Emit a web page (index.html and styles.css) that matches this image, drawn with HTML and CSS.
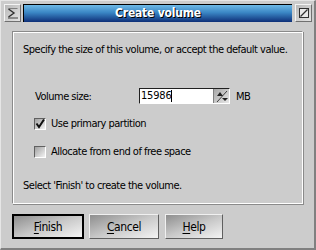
FILE: index.html
```html
<!DOCTYPE html>
<html lang="en">
<head>
    <meta charset="UTF-8">
    <title>Create volume</title>
    <link rel="stylesheet" href="styles.css">
</head>
<body>
    <div class="window">
        <div class="titlerow">
            <div class="tbtn">
                <svg width="12" height="12" viewBox="0 0 12 12">
                    <polyline points="1.5,1.5 10.5,1.5" stroke="#808080" stroke-width="1" fill="none"/>
                    <polyline points="1.5,2 7,6 1.5,10" stroke="#303030" stroke-width="1.4" fill="none"/>
                    <polyline points="1,11 11,11" stroke="#404040" stroke-width="1" fill="none"/>
                </svg>
            </div>
            <div class="titlebar">Create volume</div>
            <div class="tbtn">
                <svg width="12" height="12" viewBox="0 0 12 12">
                    <rect x="1.5" y="1.5" width="9" height="9" stroke="#303030" stroke-width="1" fill="#e8e8e8"/>
                    <line x1="2.5" y1="9.5" x2="9.5" y2="2.5" stroke="#303030" stroke-width="1.3"/>
                </svg>
            </div>
        </div>

        <div class="panel">
            <p class="intro">Specify the size of this volume, or accept the default value.</p>

            <div class="sizerow">
                <span class="label">Volume size:</span>
                <div class="spin">
                    <div class="field">15986<span class="caret"></span></div>
                    <div class="spinbtn">
                        <svg width="14" height="13" viewBox="0 0 14 13">
                            <line x1="12" y1="1" x2="2" y2="12" stroke="#404040" stroke-width="1"/>
                            <polygon points="2,6 5,2 8,6" fill="#202020"/>
                            <polygon points="7,8 13,8 10,11" fill="#202020"/>
                        </svg>
                    </div>
                </div>
                <span class="unit">MB</span>
            </div>

            <label class="check">
                <span class="box">
                    <svg width="10" height="10" viewBox="0 0 10 10">
                        <polyline points="1.5,4.5 4,8 9,0.5" stroke="#101010" stroke-width="2" fill="none"/>
                    </svg>
                </span>
                Use primary partition
            </label>

            <label class="check second">
                <span class="box"></span>
                Allocate from end of free space
            </label>

            <p class="outro">Select 'Finish' to create the volume.</p>
        </div>

        <div class="buttons">
            <button class="btn default"><u>F</u>inish</button>
            <button class="btn cancel"><u>C</u>ancel</button>
            <button class="btn help"><u>H</u>elp</button>
        </div>
    </div>
</body>
</html>
```

FILE: styles.css
```css
* {
    box-sizing: border-box;
}
body {
    margin: 0;
    background: #cccccc;
    font-family: "DejaVu Sans Condensed", "Liberation Sans", sans-serif;
    font-size: 11px;
    letter-spacing: -0.5px;
    color: #000;
}
.window {
    width: 316px;
    height: 250px;
    background: #cccccc;
    border-top: 1px solid #e6e6e6;
    border-left: 1px solid #e6e6e6;
    border-right: 2px solid #808080;
    border-bottom: 2px solid #808080;
    padding: 3px 2px 0 3px;
    display: flex;
    flex-direction: column;
}
.titlerow {
    display: flex;
    gap: 2px;
    height: 18px;
}
.tbtn {
    width: 17px;
    height: 18px;
    background: linear-gradient(135deg, #b8b8b8, #e4e4e4);
    border: 1px solid;
    border-color: #f4f4f4 #707070 #707070 #f4f4f4;
    display: flex;
    align-items: center;
    justify-content: center;
}
.titlebar {
    flex: 1;
    background: linear-gradient(#6cb8e6, #3a86c4 45%, #0e2f78);
    border-top: 1px solid #000;
    border-left: 1px solid #000;
    color: #fff;
    font-weight: bold;
    font-size: 12px;
    letter-spacing: -0.2px;
    text-align: center;
    line-height: 16px;
    text-shadow: 1px 1px 0 #000;
    margin-right: 1px;
}
.panel {
    margin: 9px 9px 0 8px;
    height: 173px;
    border: 1px solid;
    border-color: #8a8a8a #ffffff #ffffff #8a8a8a;
    box-shadow: inset 1px 1px 0 #ffffff, 1px 1px 0 #8a8a8a;
    padding: 11px 0 0 10px;
    display: flex;
    flex-direction: column;
}
.intro, .outro {
    margin: 0;
    line-height: 13px;
}
.sizerow {
    display: flex;
    align-items: center;
    margin-top: 32px;
    height: 16px;
}
.label {
    width: 116px;
    padding-left: 12px;
}
.spin {
    display: flex;
    height: 16px;
    border: 1px solid;
    border-color: #202020 #ffffff #ffffff #202020;
}
.field {
    width: 73px;
    background: #fff;
    padding-left: 1px;
    line-height: 14px;
    letter-spacing: -0.2px;
    display: flex;
    align-items: center;
}
.caret {
    display: inline-block;
    width: 1px;
    height: 12px;
    background: #000;
}
.spinbtn {
    width: 16px;
    background: linear-gradient(135deg, #a8a8a8, #e8e8e8);
    border-left: 1px solid #808080;
    display: flex;
    align-items: center;
    justify-content: center;
}
.unit {
    margin-left: 6px;
}
.check {
    display: flex;
    align-items: center;
    gap: 5px;
    margin-top: 13px;
    padding-left: 11px;
    height: 13px;
}
.check.second {
    margin-top: 15px;
}
.box {
    width: 12px;
    height: 12px;
    border: 1px solid;
    border-color: #606060 #ffffff #ffffff #606060;
    background: linear-gradient(135deg, #a0a0a0, #f4f4f4);
    display: flex;
    align-items: center;
    justify-content: center;
}
.outro {
    margin-top: 21px;
}
.buttons {
    display: flex;
    gap: 5px;
    margin: 10px 0 0 8px;
}
.btn {
    height: 25px;
    font-family: inherit;
    font-size: 12px;
    letter-spacing: -0.4px;
    background: linear-gradient(160deg, #8e8e8e, #c8c8c8 50%, #f4f4f4);
    border: 1px solid;
    border-color: #f0f0f0 #606060 #606060 #f0f0f0;
    padding: 0;
    color: #000;
}
.btn u {
    text-underline-offset: 2px;
}
.default {
    width: 72px;
    border: 2px solid #000;
}
.cancel {
    width: 70px;
}
.help {
    width: 58px;
    margin-left: 1px;
}
```
